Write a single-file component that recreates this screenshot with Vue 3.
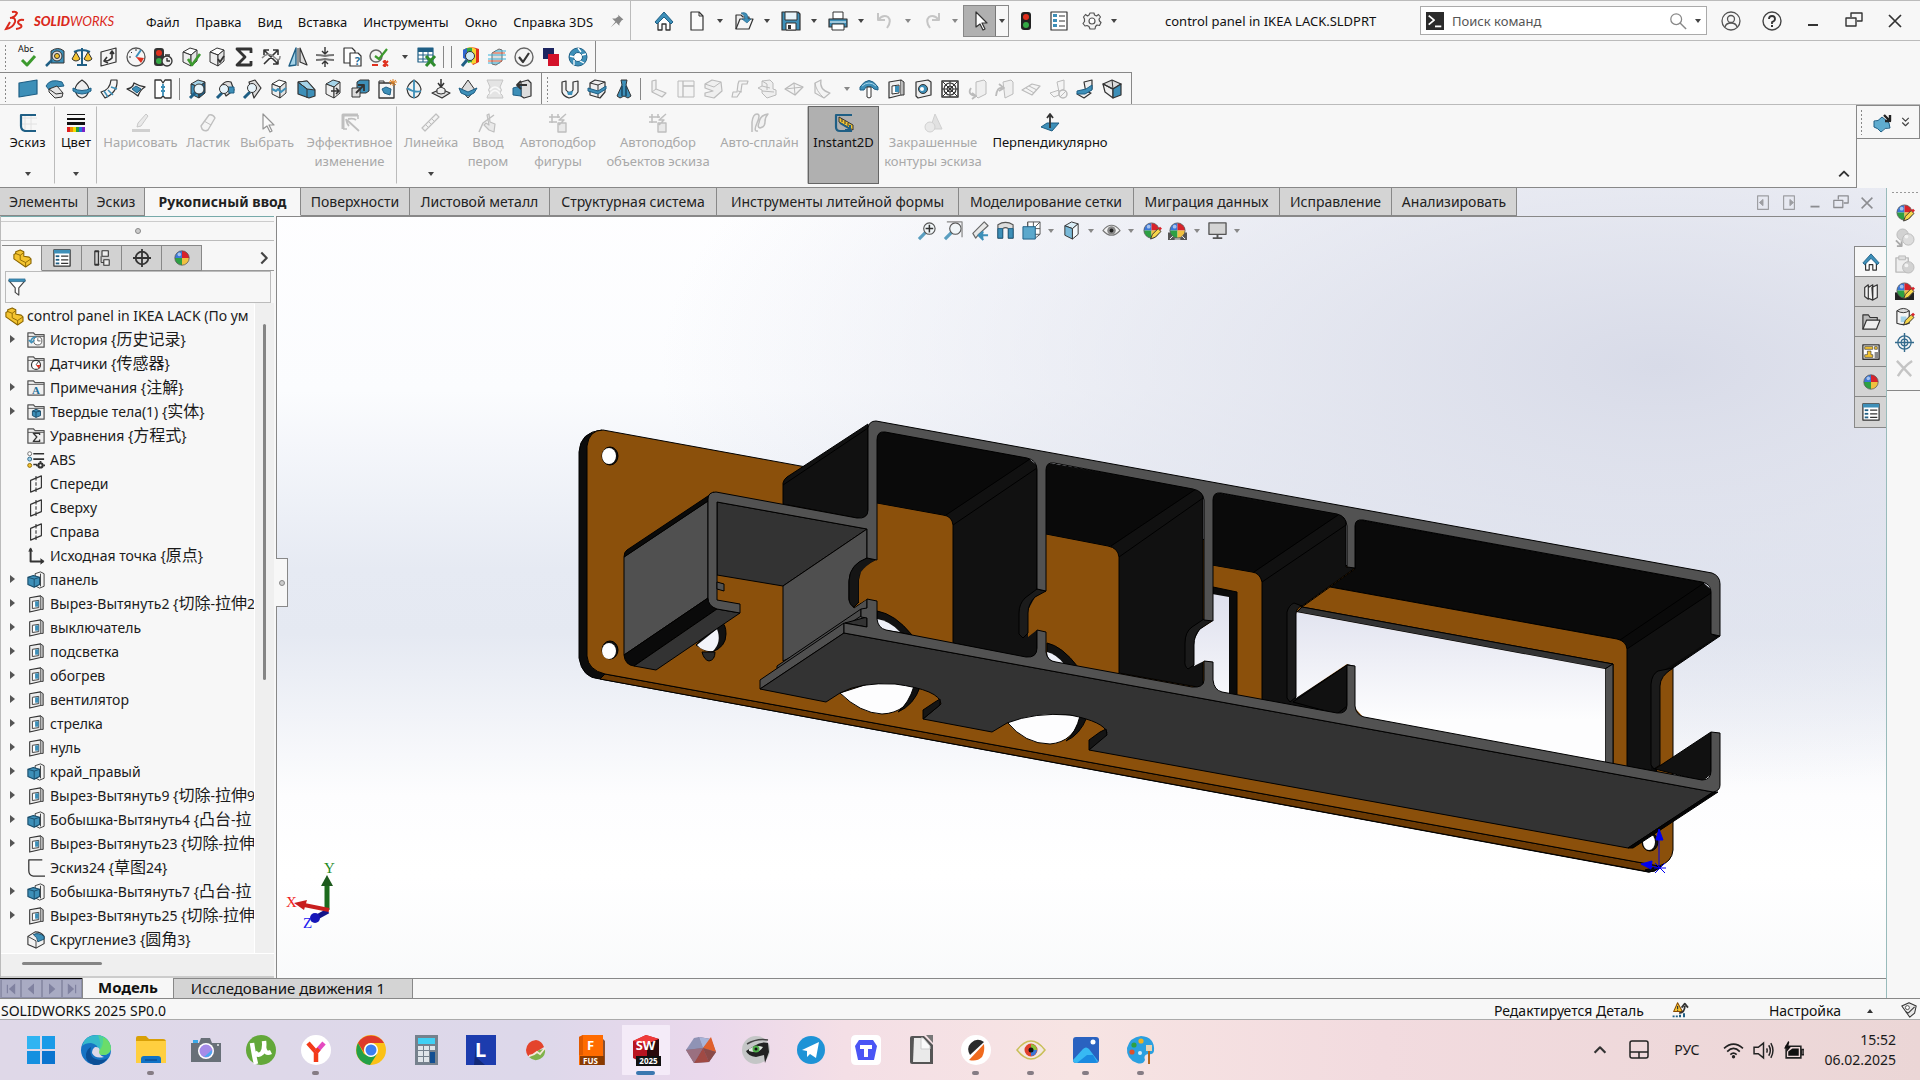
<script setup>
import { h } from 'vue'

const K = '#333'
const B = '#3d8fb8'
const L = '#a5d3e8'
const N = '#1f5f85'
const G = '#e4e4e4'
const Y = '#f4c430'

const c = (x, y, r) => `M${x - r} ${y}a${r} ${r} 0 1 0 ${2 * r} 0a${r} ${r} 0 1 0 ${-2 * r} 0z`
const r = (x, y, w, t) => `M${x} ${y}h${w}v${t}h${-w}z`

const cube = (a, b, d) => [
  ['M3 5l7-4 7 2-6 5z', a, K],
  ['M3 5l8 3v11l-8-4z', b, K],
  ['M11 8l6-5v11l-6 5z', d, K]
]
const ball = [
  ['M10 10V2a8 8 0 0 0-8 8z', '#3b78d8'],
  ['M10 10V2a8 8 0 0 1 8 8z', '#d8232a'],
  ['M10 10H2a8 8 0 0 0 8 8z', '#2ea043'],
  ['M10 10h8a8 8 0 0 1-8 8z', '#f0c040'],
  [c(10, 10, 8), 'none', '#555', 0.8],
  [c(7, 6, 2), 'rgba(255,255,255,.55)']
]
const pencil = [['M9 19l2-5 6-6 3 3-6 6z', '#f7d64a', K], ['M17 8l2-2 2 2-2 2z', '#d8232a']]
const folder = [['M1 18V2h6l2 2h10v14z', '#efefef', '#555', 1.4], ['M1 6h18', 'none', '#555', 1]]
const glass = [['M8 12l-7 7', 'none', '#5a9ec0', 3.4], [c(12, 8, 6), '#f1f6f9', '#555', 1.2]]
const lens = [...cube(L, B, N), ['M8 13l-6 6', 'none', N, 3], [c(11, 10, 5), '#e6f3fa', K]]
const bend = [['M3 2l4-1v9l10 4-4 4-10-5z', G, K, 1.2], ['M3 13l4-3', 'none', K]]

const icons = {
  home: [['M4 10v9h4v-6h4v6h4v-9l-6-6z', '#fff', K, 1.3], ['M1 11l9-10 9 10-2 2-7-7-7 7z', B, N]],
  page: [['M4 1h8l4 4v14H4z', '#fafafa', K, 1.2], ['M12 1v4h4', 'none', K]],
  open: [['M2 18V4h5l2 2h6v3', '#eee', K, 1.2], ['M2 18l4-10h13l-4 10z', '#f6f6f6', K, 1.2], ['M7 2q7-2 7 6h3l-4 4-5-4h3q0-4-4-6z', B, N, 0.6]],
  save: [['M1 1h16l2 2v16H1z', B, K, 1.2], [r(4, 1, 12, 8), '#e8f3f9', K], [r(5, 12, 10, 7), '#fff', K], [r(7, 14, 3, 4), K]],
  print: [[r(5, 1, 10, 7), '#fff', K], ['M1 8h18v8H1z', B, K, 1.2], [r(4, 13, 12, 6), '#fff', K], ['M2 11h16', 'none', '#fff', 1]],
  undo: [['M3 2v7h7M3 9q5-6 10-3q4 4-1 11', 'none', '#555', 2]],
  redo: [['M17 2v7h-7M17 9q-5-6-10-3q-4 4 1 11', 'none', '#555', 2]],
  cursor: [['M6 1v15l4-3 3 6 2-1-3-6h5z', '#fff', K, 1.2]],
  light: [['M8 1h4q3 0 3 3v12q0 3-3 3H8q-3 0-3-3V4q0-3 3-3z', '#222'], [c(10, 6, 3), '#e0301e'], [c(10, 14, 3), '#35a845']],
  list: [[r(2, 1, 16, 18), '#fff', K, 1.2], [r(4, 3, 4, 3), B], [r(4, 8, 4, 3), B], [r(4, 13, 4, 3), B], ['M10 5h6M10 10h6M10 15h6', 'none', K]],
  gear: [['M8 2h4l.5 2 2 1 2-1.500 2 2.500-1.500 2 .5 2 1.500 1.500-1.500 3-2.500-.5-1.500 1.500-.5 2.500H8l-1-2.500-2-1-2 .5-2-2.500 1.500-2V8L1.500 6l2-2.500 2 1.500 1.500-1z', '#f3f3f3', '#555', 1.2], [c(10, 10, 3), '#fff', '#555', 1.2]],
  pin: [['M11 2l7 6-2 1-3 4v3l-4-4-7 6 6-7-4-4 4 0 4-3z', '#888']],
  prompt: [[r(0, 0, 20, 20), '#2b2b2b'], ['M3 4l6 5-6 5', 'none', '#fff', 2], ['M10 16h7', 'none', '#fff', 2]],
  search: [[c(8, 8, 6), 'none', '#888', 1.4], ['M12 12l7 7', 'none', '#888', 1.6]],
  user: [[c(10, 10, 9), 'none', '#555', 1.3], [c(10, 8, 3.5), 'none', '#555', 1.3], ['M4 16q1-4 6-4t6 4', 'none', '#555', 1.3]],
  help: [[c(10, 10, 9), 'none', '#444', 1.4], ['M7 8q0-3 3-3t3 3q0 2-3 3v2', 'none', '#333', 1.8], [r(9, 14, 2, 2), K]],
  min: [[r(5, 13, 10, 2), K]],
  restore: [['M7 6V2h11v8h-5', 'none', K, 1.4], [r(2, 7, 10, 8), 'none', K, 1.4]],
  close: [['M4 4l12 12M16 4L4 16', 'none', K, 1.7]],
  abc: [['M4 13l5 5 8-9', 'none', '#3c9a2e', 3]],
  tape: [['M6 4q7-5 13 0v12H6z', B, K], [c(12, 9, 5), '#ddd', K], [c(12, 9, 2.500), Y, K], ['M7 13l-6 6', 'none', N, 2.5]],
  scale: [['M10 1v17M5 18h10M2 5q8-4 16 0', 'none', N, 2], ['M0 12l4-7 4 7q-4 4-8 0z', Y, K], ['M12 12l4-7 4 7q-4 4-8 0z', Y, K]],
  mass: [['M2 5l15-4v14L2 19z', '#f4f4f4', K, 1.2], ['M13 5v6q-3 3-7 3M8 10l-3 4 4 2M11 7l2-3 2 3', 'none', K, 1.6]],
  gauge: [[c(10, 10, 9), '#f6f6f6', '#555', 1.3], ['M10 10l5-7', 'none', B, 2], ['M10 10l8 1-3 5z', '#e0301e'], ['M3 10h2M5 5l1 1M10 2v2', 'none', K]],
  lightClock: [['M4 1h4q3 0 3 3v12q0 3-3 3H4q-3 0-3-3V4q0-3 3-3z', '#333'], [c(6, 6, 3), '#e0301e'], [c(6, 14, 3), '#35a845'], [c(14, 14, 5), '#eee', K, 1.300], ['M14 11v3h3M12 8h5', 'none', K, 1.4]],
  cubeCheck: [...cube('#fff', '#eee', G), ['M8 12l4 6 8-11', 'none', '#3c9a2e', 2.600]],
  cubeTick: [...cube('#fff', '#eee', G), ['M11 12l2 3 4-6', 'none', K, 1.800]],
  sigma: [['M17 6V2H3l8 8-8 8h14v-4', 'none', K, 2.800]],
  cross: [['M3 3l14 14M17 3L3 17M3 8V3h5M12 17h5v-5M12 3h5v5', 'none', K, 1.600], ['M1 11q6-7 12-1t6-1', 'none', '#888', 1.500]],
  mirror: [['M8 1v17l-7 1z', L, N, 1.400], ['M12 1l7 17-7-3z', '#ddd', K, 1.200], ['M10 1v18', 'none', K]],
  squeeze: [['M1 8q5 0 9 1 4-1 9-1M1 13q5 0 9-1 4 1 9 1', 'none', '#777', 2.200], ['M10 0v6M7 4l3 3 3-3M10 20v-5M7 17l3-3 3 3', 'none', K, 1.400]],
  docHelp: [['M2 1h8l3 3v12H2z', '#fff', K, 1.200], ['M8 6h8l3 3v10H8z', '#fff', K, 1.200]],
  nodeCheck: [[c(7, 9, 6), '#f4f4f4', '#666', 1.500], ['M6 9l4 3 8-10', 'none', '#3c9a2e', 2.200], ['M3 18h6M14 14l5 5M19 14l-5 5M16 13v7', 'none', '#e0301e', 1.800]],
  sheet: [[r(1, 1, 15, 14), '#fff', N, 1.200], [r(1, 1, 15, 4), N], ['M1 8h15M1 12h15M6 2v13M11 2v13', 'none', N], ['M9 9l9 10M18 9l-9 10', 'none', '#2e8b2e', 3]],
  rainbow: [['M3 3q7-5 16-1v13l-6 3z', '#e0301e'], ['M3 3q7-5 13-1v14l-4 1z', '#f6d632'], ['M3 3q5-3 9-2v14l-4 1z', '#35a845'], ['M3 3l4-2v12l-4-2z', '#2f66d0'], [c(10, 9, 4.500), '#cfe8f3', K], ['M7 13l-5 6', 'none', N, 3]],
  flow: [['M5 6l7-4 3 1v11l-6 4-4-1z', '#ddd', '#666'], ['M1 8h18M1 12h18M1 16h12M8 4h11', 'none', '#3ab0d8', 1], ['M1 14h14M6 6h12', 'none', '#e05a3a', 1]],
  okCircle: [[c(10, 10, 9), '#f3f3f3', '#666', 1.400], ['M5 10l4 5 6-9', 'none', K, 2.200]],
  swatch: [[r(2, 1, 11, 11), '#1d2560'], [r(7, 7, 11, 12), '#d3122a']],
  hex: [[c(10, 10, 9), B, N], [c(10, 10, 4.500), '#fff', N], ['M10 1l3 4M18 7l-4 1M16 16l-4-2M6 18v-5M2 9l4 1', 'none', '#fff', 1.300]],
  plane: [['M1 4l18-3v14L1 18z', B, N, 1.200]],
  sweep: [['M1 7q4-8 16-4l2 4-8 1-6 4z', B, N], ['M4 10l8-3 6 7-1 4-7 1-6-6z', G, K], ['M4 10l7 5 7-1', 'none', K]],
  egg: [['M10 1q6 4 7 9-1 8-7 9-6-1-7-9 1-5 7-9z', '#eee', K, 1.200], ['M1 9q9 5 18 0v3q-9 6-18 0z', B, N]],
  elbow: [['M12 1l6 0q1 12-12 18l-4-6q9-2 10-12z', '#f5f5f5', K, 1.200], ['M12 8l6 2M9 11l5 5M5 12l4 6', 'none', B, 1.500]],
  diamond: [['M1 10q6-1 7-6 5 3 11 4-5 3-7 9-5-4-11-7z', '#eee', K, 1.300], ['M6 10l4-3 5 3-4 4z', B, N]],
  shirt: [['M2 1h6l2 3 2-3h6v18h-6l-2-2-2 2H2z', '#fff', K, 1.300], ['M10 5v12M8 8h4M8 12h4', 'none', B, 1.800]],
  lens,
  lens2: [['M6 7q4-6 10-4l3 8-8 6z', '#ddd', K, 1.200], ['M13 8h6v6h-5z', B, N], ['M8 13l-6 6', 'none', N, 3], [c(9, 10, 4.500), '#e6f3fa', K]],
  lens3: [['M7 3l6-2 6 8-7 10z', '#ddd', K, 1.200], ['M8 13l-6 6', 'none', N, 3], [c(10, 9, 4.500), '#e6f3fa', K]],
  wave: [...cube('#fff', '#eee', G), ['M3 10l4 2 2-2 3 3 5-4', 'none', B, 2]],
  wedge: [['M2 3l9-1 8 9v6l-6 2-11-4z', B, K, 1.200], ['M2 3l9-1 8 9-8-1z', L, K], ['M2 3l9 7v9', 'none', K]],
  cubeArrow: [...cube(L, '#eee', G), ['M8 12h8M13 9l3 3-3 3', 'none', K, 1.600]],
  growBox: [['M7 3l3-2h9v11l-3 2H7z', B, K], [r(2, 9, 8, 9), '#ddd', K], ['M6 14l7-7M8 6h6v6', 'none', K, 1.800]],
  starBox: [['M2 4h15v15H2z', '#f5f5f5', K, 1.300], ['M2 4V2h5v2', 'none', K], ['M5 10l4-2 5 2-1 6-6-2z', B, N], ['M16 0v7M12 3h8M13 1l6 5M19 1l-6 5', 'none', '#e08020', 1]],
  eggB: [['M10 1q6 4 7 9-1 8-7 9-6-1-7-9 1-5 7-9z', '#f2f2f2', K, 1.200], ['M3 9q7 5 14 3M10 1v18', 'none', B, 1.800]],
  press: [['M1 14l9-4 9 4-8 5z', '#ddd', K, 1.200], ['M6 10l4-2 4 2v4l-4 1-4-1z', '#eee', K], ['M10 0v7M7 4l3 4 3-4', 'none', K, 1.500]],
  eggC: [['M10 1l7 10-7 8-7-8z', '#ddd', K], ['M1 9l9 4 9-4-3 5-6 3-7-3z', B, N]],
  arch: [['M2 19q0-3 3-5-3-3 0-6L2 1h16l-3 7q3 3 0 6 3 2 3 5z', '#bbb', '#555'], ['M5 15q5-7 10 0M5 11q5-6 10 0', 'none', '#fff', 1.500]],
  stack: [['M9 3l7-2 3 3v13l-7 2-3-2z', '#ddd', K, 1.200], ['M1 9l8-2v10l-8-1z', B, N], ['M15 6H6M9 2L5 6l4 4', 'none', K, 1.800]],
  uBend: [['M2 3l4-1v9q4 5 7 0V3l5-1v11q-3 5-9 6-6-2-7-6z', '#f2f2f2', K, 1.200], ['M7 13l6-1-1 4-4 0z', B]],
  clamp: [['M3 4l5-3 10 2v10l-5 6-10-3z', '#eee', K, 1.200], ['M3 4l8 2 7-3M11 6v12', 'none', K], ['M1 9l10 3 8-5v3l-8 5-10-3z', B, N]],
  dress: [['M7 1h6l-1 5 5 11-3 2-4-2-4 2-3-2 5-11z', B, K], ['M8 7v10M12 7v10', 'none', '#173f59', 1.400]],
  bend,
  bend2: [[r(2, 2, 16, 16), '#eee', K], ['M7 2v16M7 7h11', 'none', K, 1.300]],
  bend3: [['M2 5l7-4 9 2 1 9-8 7-9-2 0-3 8-2-8-3z', '#ddd', K, 1.200], ['M2 5l9 3 7-5', 'none', K]],
  bend4: [['M9 2h9l-1 3h-5l-1 7-4 6H2l1-5h4l1-8z', '#eee', K, 1.200], ['M8 12l4 1', 'none', K]],
  bend5: [['M5 2l8-1 3 3v6l3 1v5l-9 3-5-5V11l-4-2 4-2z', '#ddd', K], ['M5 7l8 2M5 12l12 1M5 2l5 3v6', 'none', K]],
  bend6: [['M1 10l9-6 9 4-8 8z', '#eee', K, 1.300], ['M1 10l18-2M10 4l1 12', 'none', K]],
  bend7: [['M4 4l6-3q-2 10 9 13l-6 5-9-5z', '#eee', K, 1.200], ['M4 4q1 8 9 15', 'none', K]],
  umbrella: [['M1 8q9-13 18 0v3l-4-1-2-2H7l-2 3-4 0z', B, N], ['M8 8h4v10q-2 2-4 0z', '#fff', K], ['M3 7q7-6 14 0', 'none', L]],
  cut: [['M3 3l12-2v15L3 19z', '#eee', K, 1.200], ['M15 1l3 2v13l-3 0', '#bbb', K], ['M6 7l7-1v8l-7 1z', '#fff', K], [r(9, 7, 4, 6), B]],
  cutHole: [['M3 3l12-2 3 2v13L5 19l-2-2z', '#eee', K, 1.200], [c(10, 10, 4.500), B, K], [c(9, 10, 2), '#fff']],
  grid: [[r(2, 2, 16, 16), '#fff', K, 1.500], [c(10, 10, 6), 'none', K, 1.200], [c(10, 10, 3), 'none', K], ['M10 2v16M2 10h16M3 3l14 14M17 3L3 17', 'none', K]],
  turn: [['M9 3l8-2 2 2v12l-8 4-2-2z', '#ddd', K], ['M4 9q-4 6 4 8M5 14l4 3-4 3', 'none', K, 1.800]],
  turn2: [['M9 3l8-2 2 2v12l-8 4z', '#ddd', K], ['M2 17q1-9 6-8M5 5l5 4-5 3', 'none', K, 1.800]],
  panels: [['M1 11l10-6 8 2-8 9z', '#eee', K, 1.200], ['M5 9l8 5M8 7l8 4', 'none', K]],
  noBend: [['M9 3l7-2v9l-5 3zM2 14l9-3v5l-5 2z', '#eee', K], [c(15, 15, 4), '#eee', K, 1.500], ['M12 18l6-6', 'none', K]],
  seat: [['M9 3l8-2v9l-6 4z', '#eee', K, 1.200], ['M2 15l8-3 6 2-7 5z', '#eee', K, 1.200], ['M2 12l9-2 6-4v5l-7 4-8 0z', B, N]],
  boxCut: [['M1 5l9-4 9 4-8 5z', '#ddd', K, 1.200], ['M1 5l10 5v9l-8-6z', '#f0f0f0', K, 1.200], ['M11 10l8-5v11l-8 3z', B, K, 1.200], ['M1 5l9 5M10 1l1 9', 'none', K]],
  sketch: [['M7 1v18M13 1v18M4 5h15M4 11h15', 'none', '#e2e2e2'], ['M18 2H3v11q0 4 4 5h11', 'none', N, 2.200]],
  color: [[r(1, 1, 18, 1), '#111'], [r(1, 5, 18, 2), '#111'], [r(1, 9, 18, 3), '#111'], [r(1, 14, 3, 5), '#e02020'], [r(4, 14, 3, 5), '#f08a00'], [r(7, 14, 3, 5), '#f2dc00'], [r(10, 14, 3, 5), '#27a03a'], [r(13, 14, 3, 5), '#2474d8'], [r(16, 14, 3, 5), '#7a22c8']],
  draw: [['M6 14l1-4 8-9 2 2-7 10z', '#ddd', '#999'], [r(1, 16, 18, 3), '#aaa']],
  eraser: [['M3 13l8-11q4-1 6 3l-7 12q-4 2-6-1z', '#f4f4f4', '#888', 1.400], ['M6 8l7 4', 'none', '#888']],
  effect: [['M18 2H3v14', 'none', '#888', 3], ['M18 2v4M3 16h4', 'none', '#888', 1.500], ['M7 7l12 11M6 6q1 5 3 7M8 6q6-1 8 1', 'none', '#888', 1.800]],
  ruler: [['M1 15L15 1l3 3L4 18z', '#f1f1f1', '#888', 1.200], ['M5 12l2 2M8 9l2 2M11 6l2 2', 'none', '#888']],
  hand: [['M9 2l2-1 1 8 5 2-1 8-5-2-5-5 2-2 3 2z', '#ddd', '#888', 1.200], ['M16 2L5 10 1 19', 'none', '#888', 1.500]],
  shape: [['M4 1v9M10 1v4M1 4h11M1 9h8', 'none', '#888', 1.500], ['M10 10h8v9h-8zM18 1l-7 6h5l-5 5', '#ddd', '#888', 1.400]],
  spline: [['M2 19V9q1-8 5-8t0 9 1 8M9 10q1-8 9-9-3 3-3 8t-5 6q-3-1-1-5', '#eee', '#888', 1.500]],
  instant: [['M18 2H2v12q0 4 4 4h12', 'none', N, 2.200], ['M5 4l14 8v5L5 9z', Y, K], ['M8 6v3M11 8v3M14 10v3', 'none', K], ['M6 10l10 6M16 12v5h-5', 'none', N, 2]],
  shaded: [['M12 1l7 15H7z', '#ccc', '#aaa'], [c(7, 14, 5), '#ddd', '#aaa']],
  normal: [['M1 14l6-4h12l-7 8z', B, N], ['M10 15V2M7 5l3-4 3 4', 'none', K, 1.800]],
  surface: [['M1 9q4 1 8-4 4 3 7 6l1 5q-5-1-9 4-3-4-7-5z', '#5faccf', N], ['M11 3l6 6M17 3v6h-5', 'none', '#222', 2.400]],
  dbl: [['M5 3l5 5 5-5M5 10l5 5 5-5', 'none', '#444', 1.800]],
  fit: [...glass, ['M12 4v8M8 8h8', 'none', K, 1.600]],
  zoomArea: [...glass, ['M3 1h16v16', 'none', '#888', 1.300]],
  prev: [['M3 13L15 1l4 4-10 9-3 4z', '#e8e8e8', '#666', 1.200], ['M19 15h-8M14 11l-5 4 5 5', B, B, 2]],
  section: [['M2 4q8-5 16 0v14h-5V8q-3-2-6 0v10H2z', '#ddd', '#555', 1.200], [r(2, 8, 5, 10), B, N], [r(13, 8, 5, 10), B, N]],
  orient: [[r(6, 1, 13, 13), '#fff', '#555'], ['M6 1v13l-4 4M19 1l-5 5M12 1v13M6 8h13M19 14l-5 4', 'none', '#555'], [r(1, 6, 13, 13), '#5ba8cc', N]],
  display: cube('#d9edf6', '#79b9d8', '#f2f8fb'),
  eye: [['M1 10q9-11 18 0-9 10-18 0z', '#f1f1f1', '#777', 1.200], [c(10, 10, 4.500), '#888'], [c(10, 10, 2), '#222']],
  ball,
  ballPencil: [...ball, ...pencil],
  ballScene: [['M0 12h4l2 5h8l2-5h4v8H0z', '#555'], ...ball, ['M2 19l3-3M18 19l-3-3M7 19h6', 'none', '#fff']],
  ballScenePencil: [['M0 12h20v8H0z', '#222'], ...ball, ...pencil],
  ballCopy: [[c(8, 6, 6), '#d2d2d2', '#bbb'], [c(14, 11, 6), '#dcdcdc', '#bbb'], [c(12, 8, 2), '#f2f2f2'], ['M1 12l6 6M7 13v5H2', 'none', '#aaa', 2]],
  ballPaste: [['M1 3h13v15H1z', '#eee', '#bbb', 1.500], [r(4, 1, 7, 4), '#ddd', '#bbb'], [c(14, 13, 6), '#d2d2d2', '#bbb'], [c(12, 11, 2), '#f2f2f2']],
  can: [['M2 4v13q7 3 13 0V4', '#f5f5f5', K, 1.200], ['M2 4q7-5 13 0-6 4-13 0z', '#ddd', K], [r(6, 10, 6, 6), L], ...pencil],
  target: [[c(10, 10, 7), 'none', '#346b8d', 1.300], [c(10, 10, 3.500), 'none', '#346b8d', 1.200], ['M10 0v20M0 10h20', 'none', '#346b8d', 1.500]],
  bigX: [['M2 2l15 16M18 2Q9 8 3 18', 'none', '#c4c4c4', 2.500]],
  monitor: [[r(1, 2, 18, 12), '#d4d4d4', '#555', 1.400], ['M10 14v4M5 18h10', 'none', '#555', 2]],
  books: [['M3 5l4-3v16l-4-3zM7 5l5-3v17l-5-2zM11 5l6-3v14l-5 3z', '#f1f1f1', K, 1.300]],
  folderOpen: [['M1 18V2h6l2 3h8v4', '#bbb', K, 1.300], ['M1 18l4-10h15l-4 10z', '#eee', K, 1.300]],
  palette: [[r(1, 2, 18, 16), '#fff', K, 1.500], [r(3, 4, 9, 3), Y, K, 0.700], [r(14, 4, 3, 3), Y, K, 0.700], ['M3 16v-3h3v-4h4v4h2v3z', Y, K, 0.700], [r(14, 10, 4, 7), '#888']],
  props: [[r(1, 1, 18, 18), '#fff', K, 1.400], [r(1, 1, 18, 4), B], [r(3, 7, 4, 2), N], [r(3, 11, 4, 2), N], [r(3, 15, 4, 2), N], ['M9 8h8M9 12h8M9 16h8', 'none', K, 1.300]],
  part: [['M1 6l2-1V3l5-2 4 2v5l6 1 2 2v5l-6 4L1 11z', Y, '#8a6500', 1.200], ['M3 5l5 2 4-3M8 7v5l6 3 6-4M14 15v5', 'none', '#8a6500']],
  config: [['M2 2v16M2 3h5M2 17h5M2 2h4v16H2', 'none', K, 1.300], [r(10, 2, 7, 6), '#eee', K, 1.200], [r(12, 12, 6, 6), '#eee', K, 1.200], ['M9 8v7h3', 'none', K]],
  cross2: [[c(10, 10, 7), 'none', K, 2], ['M10 0v20M0 10h20', 'none', K, 2]],
  chevron: [['M7 4l6 6-6 6', 'none', '#444', 2.400]],
  up: [['M4 13l6-6 6 6', 'none', K, 2.400]],
  funnel: [['M1 3h18l-7 8v8l-4-3v-5z', '#fff', '#444', 1.300], [r(1, 1, 18, 3), B, N, 0.600]],
  history: [...folder, [c(12, 11, 4.500), '#fff', '#555'], ['M12 8v3h3', 'none', '#555'], ['M4 12q1-5 6-5M2 10l3 3 3-3', 'none', B, 1.800]],
  sensor: [...folder, [c(10, 11, 5), '#fff', K, 1.300], ['M10 11l5 0-2 4z', '#e0301e'], ['M10 11l3-4', 'none', K]],
  note: folder,
  equation: [...folder, ['M14 9V7H7l4 4-4 5h7v-2', 'none', K, 1.500]],
  bodies: [...folder, ['M6 9l4-2 5 2v5l-5 2-4-2z', B, '#174a68'], ['M6 9l4 1 5-1M10 10v6', 'none', '#174a68']],
  material: [[c(3, 3, 2.200), '#fff', '#666'], [c(3, 9, 2.200), L, N], [c(3, 16, 2.200), Y, '#8a6500'], ['M7 3h12M7 9h12M7 15h4', 'none', K, 1.800], [c(15, 16, 3.500), K], [c(15, 16, 1.200), '#f7f7f7'], ['M15 11v2M10 16h2M18 16h2', 'none', K, 2]],
  refPlane: [['M4 6l12-5v13L4 19z', 'none', K, 1.300], ['M10 1v5M10 8v4M10 14v5', 'none', K, 1.200]],
  origin: [['M4 2v14h14', 'none', K, 2.200], ['M2 5l2-4 2 4M15 13l4 3-4 3', K, K]],
  boss: [['M9 3l6-2 4 2v14l-5 2-4-2z', '#f3f3f3', K], ['M15 3v14', 'none', K], ['M1 7l6-2 7 2v8l-6 3-7-3z', B, '#174a68', 1.200], ['M1 7l7 2 6-2M8 9v9', 'none', '#174a68']],
  sketchItem: [['M17 1H2v12q0 5 5 6h13', 'none', K, 1.400]],
  fillet: [['M1 6l8-5q7 0 10 5v8l-9 5-9-4z', '#f2f2f2', K, 1.200], ['M7 4q6-3 12 2v3l-7 3q0-5-5-8z', B, '#174a68'], ['M1 6l9 5v8', 'none', K]],
  paneL: [[r(4, 2, 12, 15), 'none', '#555', 1.300], ['M10 6v7L6 9.500z', '#555', '#555']],
  paneR: [[r(4, 2, 12, 15), 'none', '#555', 1.300], ['M11 6v7l4-3.500z', '#555', '#555']],
  rebuild: [['M2 12L7 1l6 11z', Y, '#8a4b00', 1.300], ['M7 5v4M7 10v1', 'none', K, 1.500], ['M9 14q7-1 7-9M12 7l4-5 4 5', 'none', K, 2.200], ['M2 19v-2M6 19v-2M10 19v-3M15 19v-5', 'none', N, 2.500]],
  tag: [['M1 5l9-4 9 4-2 9-6 5z', '#e8e8e8', K, 1.300], [c(8, 7, 2.500), '#fff', K], ['M9 14l8-8M6 12l3 2', 'none', K, 1.300]]
}

const Icon = (props) =>
  h('svg', { class: ['icon', props.off && 'off'], viewBox: '0 0 20 20', 'aria-hidden': 'true' },
    (icons[props.name] || []).map(([d, fill = 'none', stroke = 'none', w = 1]) =>
      h('path', { d, fill, stroke, 'stroke-width': w, 'stroke-linejoin': 'round' })))
Icon.props = ['name', 'off']

const menus = ['Файл', 'Правка', 'Вид', 'Вставка', 'Инструменты', 'Окно', 'Справка 3DS']
const quick = [
  { i: 'page' }, { i: 'open' }, { i: 'save' }, { i: 'print' }, { i: 'undo', off: true }, { i: 'redo', off: true }
]
const row1 = ['abc', 'tape', 'scale', 'mass', 'gauge', 'lightClock', 'cubeCheck', 'cubeTick', 'sigma', 'cross', 'mirror', 'squeeze', 'docHelp', 'nodeCheck']
const row1b = ['rainbow', 'flow', 'okCircle', 'swatch', 'hex']
const row2 = ['plane', 'sweep', 'egg', 'elbow', 'diamond', 'shirt']
const row2b = [['lens'], ['lens2'], ['lens3'], ['wave'], ['wedge'], ['cubeArrow'], ['growBox'], ['starBox'], ['eggB'], ['press'], ['eggC'], ['arch', true], ['stack']]
const row3 = ['uBend', 'clamp', 'dress']
const row3b = ['bend', 'bend2', 'bend3', 'bend4', 'bend5', 'bend6', 'bend7']
const row3c = [['umbrella'], ['cut'], ['cutHole'], ['grid'], ['turn', true], ['turn2', true], ['panels', true], ['noBend', true], ['seat'], ['boxCut']]

const ribbon = [
  { t: ['Эскиз'], i: 'sketch', w: 55, drop: true, sep: true },
  { t: ['Цвет'], i: 'color', w: 42, drop: true, sep: true },
  { t: ['Нарисовать'], i: 'draw', w: 87, off: true },
  { t: ['Ластик'], i: 'eraser', w: 48, off: true },
  { t: ['Выбрать'], i: 'cursor', w: 70, off: true },
  { t: ['Эффективное', 'изменение'], i: 'effect', w: 95, off: true, sep: true },
  { t: ['Линейка'], i: 'ruler', w: 68, off: true, drop: true },
  { t: ['Ввод', 'пером'], i: 'hand', w: 46, off: true },
  { t: ['Автоподбор', 'фигуры'], i: 'shape', w: 94, off: true },
  { t: ['Автоподбор', 'объектов эскиза'], i: 'shape', w: 106, off: true },
  { t: ['Авто-сплайн'], i: 'spline', w: 97, off: true, sep: true },
  { t: ['Instant2D'], i: 'instant', w: 71, on: true },
  { t: ['Закрашенные', 'контуры эскиза'], i: 'shaded', w: 108, off: true },
  { t: ['Перпендикулярно'], i: 'normal', w: 126 }
]
const tabs = [
  ['Элементы', 88], ['Эскиз', 57], ['Рукописный ввод', 156], ['Поверхности', 109], ['Листовой металл', 140],
  ['Структурная система', 167], ['Инструменты литейной формы', 242], ['Моделирование сетки', 175],
  ['Миграция данных', 146], ['Исправление', 112], ['Анализировать', 125]
]
const panelTabs = ['part', 'props', 'config', 'cross2', 'ball']
const tree = [
  ['history', 'История {历史记录}', 1], ['sensor', 'Датчики {传感器}'], ['note', 'Примечания {注解}', 1],
  ['bodies', 'Твердые тела(1) {实体}', 1], ['equation', 'Уравнения {方程式}'], ['material', 'ABS'],
  ['refPlane', 'Спереди'], ['refPlane', 'Сверху'], ['refPlane', 'Справа'], ['origin', 'Исходная точка {原点}'],
  ['boss', 'панель', 1], ['cut', 'Вырез-Вытянуть2 {切除-拉伸2', 1], ['cut', 'выключатель', 1],
  ['cut', 'подсветка', 1], ['cut', 'обогрев', 1], ['cut', 'вентилятор', 1], ['cut', 'стрелка', 1],
  ['cut', 'нуль', 1], ['boss', 'край_правый', 1], ['cut', 'Вырез-Вытянуть9 {切除-拉伸9', 1],
  ['boss', 'Бобышка-Вытянуть4 {凸台-拉', 1], ['cut', 'Вырез-Вытянуть23 {切除-拉伸', 1],
  ['sketchItem', 'Эскиз24 {草图24}'], ['boss', 'Бобышка-Вытянуть7 {凸台-拉', 1],
  ['cut', 'Вырез-Вытянуть25 {切除-拉伸', 1], ['fillet', 'Скругление3 {圆角3}']
]
const isHan = (s) => /[\u4e00-\u9fff]/.test(s)
const runs = (s) => s.split(/([\u4e00-\u9fff]+)/).filter(Boolean)

const viewTools = [
  ['fit'], ['zoomArea'], ['prev'], ['section'], ['orient', 1], ['display', 1], ['eye', 1], ['ballPencil'], ['ballScene', 1], ['monitor', 1]
]
const paneTabs = ['home', 'books', 'folderOpen', 'palette', 'ball', 'props']
const side = ['ballPencil', 'ballCopy', 'ballPaste', 'ballScenePencil', 'can', 'target', 'bigX']
const navs = ['M4 3v14M16 3l-8 7 8 7z', 'M14 3l-8 7 8 7z', 'M6 3l8 7-8 7z', 'M16 3v14M4 3l8 7-8 7z']

const apps = [
  { n: 'Пуск', s: [[r(1, 1, 13, 13), '#2fb4f2'], [r(16, 1, 13, 13), '#1a9be8'], [r(1, 16, 13, 13), '#1590e0'], [r(16, 16, 13, 13), '#0a74cf']] },
  { n: 'Edge', s: [[c(15, 15, 15), '#1673c4'], ['M1 11Q4 0 16 0q13 1 14 14-1 6-8 6-5 0-4-4-1-7-8-8-6 0-9 3z', '#35b9cb'], ['M17 0q12 2 13 14-2 6-8 6-5 0-4-4 3-7-1-16z', '#4cd29a'], ['M22 2q8 4 8 12-2 6-8 6-5 0-4-4 5-5 4-14z', '#6bdc6a'], ['M10 12q-3 12 9 13 5 0 8-2-6 8-14 7-9-3-8-11 1-5 5-7z', '#0c4f96'], ['M14 12q6 0 4 5 0 3 5 5-9 2-12-4 0-4 3-6z', '#dcd8e8']] },
  { n: 'Проводник', run: 1, s: [['M0 3q0-2 2-2h8l3 3h14q3 0 3 3v19H0z', '#d9a006'], [r(0, 6, 30, 22), '#ffcf3f'], ['M5 28v-4q0-3 3-3h14q3 0 3 3v4z', '#1173c6'], ['M9 25h12', 'none', '#0c4f96', 1.500]] },
  { n: 'Камера', s: [['M0 8h8l2-5h9l2 5h9v19H0z', '#687078'], [r(2, 5, 5, 3), '#39a9e8'], [c(15, 16, 8), '#fff'], [c(15, 16, 6.500), '#a58be8'], ['M15 22a6 6 0 0 0 6-7l-8 7z', '#4aa8f0'], [r(26, 9, 2, 2), '#c8ccd0']] },
  { n: 'uTorrent', s: [[c(15, 15, 15), '#63a83a'], ['M6 8q2 13 4 21M9 17q3 5 7 1 3-4 2-12M18 12q1 8 7 5', 'none', '#fff', 4.500]] },
  { n: 'Яндекс Браузер', run: 1, s: [[c(15, 15, 15), '#fff'], ['M7 8l8 9v10', 'none', '#f33a18', 4.500], ['M15 17l8-9', 'none', '#e44ac0', 4.500], ['M15 17l3-3', 'none', '#f33a18', 4.500]] },
  { n: 'Chrome', s: [[c(15, 15, 15), '#fbc116'], ['M2 8a15 15 0 0 1 26 0H15a7 7 0 0 0-6 11z', '#de3a2c'], ['M2 8a15 15 0 0 0 12 22l7-11-6 3-7-3z', '#23a047'], [c(15, 15, 7), '#fff'], [c(15, 15, 5.500), '#3c7ff0']] },
  { n: 'Калькулятор', s: [[r(4, 0, 23, 30), '#75818d'], [r(7, 3, 17, 6), '#40d0f4'], [r(7, 11, 5, 4), '#dfe5ea'], [r(13, 11, 5, 4), '#dfe5ea'], [r(19, 11, 5, 4), '#dfe5ea'], [r(7, 16, 5, 5), '#dfe5ea'], [r(13, 16, 5, 5), '#dfe5ea'], [r(19, 17, 5, 11), '#124f92'], [r(7, 22, 5, 5), '#dfe5ea'], [r(13, 22, 5, 5), '#dfe5ea']] },
  { n: 'L', s: [[r(0, 0, 30, 30), '#1c3cae'], ['M10 8v14l9 8H8z', '#132a78']], txt: 'L' },
  { n: 'Дельта', s: [['M5 15q1-9 10-10 6 1 8 7l-8 5q-4 4-8 4-2-3-2-6z', '#e4442c'], ['M8 22l10-7 6-1q1 7-5 10-6 3-11-2z', '#7fb24a'], ['M8 21q5-1 8-4l3 2 5-6', 'none', '#f4e8d8', 1.800]] },
  { n: 'Fusion', s: [['M3 2l4-2h20v30H3z', '#ff6b00'], ['M27 4l2 2v24h-2z', '#8a5030'], ['M3 2l4-2v20H3z', '#e05a00'], [r(4, 21, 24, 9), '#8a3a00']], txt: 'F', sub: 'FUS' },
  { n: 'SOLIDWORKS', on: 1, s: [['M2 6l13-6 13 4v20l-12 6-14-7z', '#b91420'], ['M2 6l13-6 13 4-12 5z', '#f03a3a'], ['M16 9l12-5v20l-12 6z', '#2a0a0c']], txt: 'SW', sub: '2025' },
  { n: 'Многогранник', s: [['M13 2l12 2 5 13-7 10-15 1L0 15z', '#7c6f8a'], ['M8 3l5-1 4 11L0 15z', '#8f93b5'], ['M13 2l12 2-8 9z', '#a8b4d8'], ['M25 2l5 15-13-4z', '#e0602c'], ['M17 13l13 4-7 10z', '#8a4a48'], ['M17 13l6 14-15 1z', '#a04a44'], ['M0 15l17-2-9 15z', '#9a7080']] },
  { n: 'Глаз', s: [[c(15, 15, 14), '#c4c6c6'], ['M13 11q7-5 14-3l1 9-4 11-1-8-8 2q-8-1-10-6z', '#222'], ['M8 14q7-5 14-2-4 7-14 4z', '#dfe8df'], [c(15, 14, 3.500), '#4fae4a'], [c(15, 14, 1.500), '#111'], ['M6 9q10-6 21-4', 'none', '#444', 1.500]] },
  { n: 'Telegram', s: [[c(15, 15, 14), '#1e93d6'], ['M6 15l17-8-3 16-6-4-3 3v-6z', '#fff']] },
  { n: 'Teno', s: [['M5 0h20q5 0 5 5v20q0 5-5 5H5q-5 0-5-5V5q0-5 5-5z', '#fff'], ['M8 5h14l4 6-3 14H7L4 11z', '#4a55f5'], ['M9 10h12v4h-4v8h-4v-8H9z', '#fff']] },
  { n: 'LibreOffice', s: [['M6 1h12l9 9v19H6q-2 0-2-2V3q0-2 2-2z', '#555'], ['M8 3h9l7 8v16H7z', '#eaeaea'], ['M15 3h2l7 8v3h-9z', '#fafafa', '#ccc'], ['M20 0h7v8z', '#777']] },
  { n: 'Слайсер', run: 1, s: [[c(15, 15, 15), '#fff'], ['M9 20q-4-7 1-12 6-6 13-1z', '#2a2a2a'], ['M23 9q1 8-2 13-5 5-13 3z', '#f06a1e']] },
  { n: 'Просмотр', run: 1, s: [['M1 15q14-18 28 0-14 18-28 0z', '#f3e7e2', '#c9bf58', 1.500], [c(15, 15, 6.500), '#e0402c'], ['M15 15V9a6 6 0 0 1 6 6z', '#8ac43a'], ['M15 15h6a6 6 0 0 1-6 6z', '#3b78d8'], [c(15, 15, 2.500), '#111']] },
  { n: 'Фотографии', run: 1, s: [['M5 2h20q3 0 3 3v20q0 3-3 3H5q-3 0-3-3V5q0-3 3-3z', '#2a62c0'], ['M2 25L12 14q3-3 6 0l9 12q-1 2-3 2H5q-3 0-3-3z', '#37b9f3'], ['M6 28L16 20h6l4 7-2 1z', '#1a8ae0'], [c(22, 7, 2.500), '#fff']] },
  { n: 'Paint', run: 1, s: [['M15 1q14 1 13 15-1 4-6 3-5 1-3 6-2 5-8 3Q0 24 1 13 4 2 15 1z', '#2ba0e0'], [c(8, 10, 2.600), '#2ea043'], [c(15, 6, 2.600), '#f2b21e'], [c(6, 17, 2.600), '#e0502c'], [c(14, 18, 2), '#d8ecf8'], ['M20 10h6v6h-6z', '#e8d2b0'], ['M22 16h2v13h-2z', '#b4681e']] }
]
</script>

<template>
  <div class="app">
    <header class="title">
      <div class="logo">
        <svg class="ds" viewBox="0 0 22 22" aria-hidden="true">
          <path d="M8 2q4-1 5 1-1 3-5 5M6 8q6-1 5 4-2 6-9 7l4-7M20 10q-5-1-6 2 0 2 3 3 2 3-5 4" fill="none" stroke="#da291c" stroke-width="2" />
        </svg>
        <span><b>SOLID</b>WORKS</span>
      </div>
      <nav class="menu">
        <a v-for="m in menus" :key="m" href="#">{{ m }}</a>
        <button class="plain" aria-label="Закрепить"><Icon name="pin" /></button>
      </nav>
      <div class="quick">
        <button class="plain first" aria-label="Главная"><Icon name="home" /></button>
        <template v-for="q in quick" :key="q.i">
          <button class="plain q" :aria-label="q.i"><Icon :name="q.i" :off="q.off" /></button>
          <i class="caret" :class="{ dim: q.off }"></i>
        </template>
        <div class="select-btn">
          <button class="plain pressed" aria-label="Выбрать"><Icon name="cursor" /></button>
          <button class="plain arrow" aria-label="Параметры выбора"><i class="caret"></i></button>
        </div>
        <button class="plain w33" aria-label="Перестроить"><Icon name="light" /></button>
        <button class="plain w33" aria-label="Свойства"><Icon name="list" /></button>
        <button class="plain w33" aria-label="Параметры"><Icon name="gear" /></button>
        <i class="caret"></i>
      </div>
      <div class="doc">control panel in IKEA LACK.SLDPRT</div>
      <label class="search">
        <Icon name="prompt" />
        <input type="text" placeholder="Поиск команд" aria-label="Поиск команд" />
        <Icon name="search" /><i class="caret"></i>
      </label>
      <div class="win">
        <button v-for="w in ['user', 'help', 'min', 'restore', 'close']" :key="w" class="plain" :aria-label="w"><Icon :name="w" /></button>
      </div>
    </header>

    <div class="bars upper">
      <div class="bar first-bar">
        <i class="grip"></i>
        <button v-for="i in row1" :key="i" class="tool" :aria-label="i">
          <span v-if="i === 'abc'" class="over">Abc</span><Icon :name="i" /><span v-if="i === 'docHelp'" class="q-mark">?</span>
        </button>
        <i class="caret wide"></i>
        <button class="tool" aria-label="Таблица"><Icon name="sheet" /></button>
        <i class="vsep"></i><i class="vsep"></i>
        <button v-for="i in row1b" :key="i" class="tool" :aria-label="i"><Icon :name="i" /></button>
      </div>
    </div>
    <div class="bars">
      <div class="bar">
        <i class="grip"></i>
        <button v-for="i in row2" :key="i" class="tool" :aria-label="i"><Icon :name="i" /></button>
        <i class="vsep"></i>
        <button v-for="i in row2b" :key="i[0]" class="tool" :aria-label="i[0]"><Icon :name="i[0]" :off="i[1]" /></button>
      </div>
      <div class="bar">
        <i class="grip"></i>
        <button v-for="i in row3" :key="i" class="tool" :aria-label="i"><Icon :name="i" /></button>
        <i class="vsep"></i>
        <button v-for="i in row3b" :key="i" class="tool" :aria-label="i"><Icon :name="i" :off="true" /></button>
        <i class="caret wide dim"></i>
        <button v-for="i in row3c" :key="i[0]" class="tool" :aria-label="i[0]"><Icon :name="i[0]" :off="i[1]" /></button>
      </div>
    </div>

    <div class="ribbon-row">
      <div class="ribbon">
        <button v-for="(b, n) in ribbon" :key="n" class="rb" :class="{ off: b.off, on: b.on, sep: b.sep }" :style="{ width: b.w + 'px' }">
          <Icon :name="b.i" />
          <span v-for="t in b.t" :key="t">{{ t }}</span>
          <i v-if="b.drop" class="caret"></i>
        </button>
        <button class="plain fold" aria-label="Свернуть"><Icon name="up" /></button>
      </div>
      <div class="mini"><i class="grip"></i><Icon name="surface" /><Icon name="dbl" /></div>
    </div>

    <div class="work">
      <main class="main">
        <div class="tabrow">
          <button v-for="(t, n) in tabs" :key="t[0]" class="tab" :class="{ active: n === 2 }" :style="{ width: t[1] + 'px' }">{{ t[0] }}</button>
          <div class="docwin">
            <button v-for="w in ['paneL', 'paneR', 'min', 'restore', 'close']" :key="w" class="plain" :aria-label="w"><Icon :name="w" /></button>
          </div>
        </div>

        <div class="body">
          <aside class="panel">
            <div class="splitter"><i class="dot"></i></div>
            <div class="ptabs">
              <button v-for="(p, n) in panelTabs" :key="p" :class="{ active: n === 0 }" :aria-label="p"><Icon :name="p" /></button>
              <span class="more"><Icon name="chevron" /></span>
            </div>
            <div class="filter"><Icon name="funnel" /></div>
            <div class="treewrap">
              <ul class="tree">
                <li class="root"><Icon name="part" /><span>control panel in IKEA LACK (По ум</span></li>
                <li v-for="t in tree" :key="t[1]">
                  <i class="exp" :class="{ none: !t[2] }"></i>
                  <span class="ic"><Icon :name="t[0]" /><b v-if="t[0] === 'note'">A</b></span>
                  <span class="name"><span v-for="(s, n) in runs(t[1])" :key="n" :class="{ han: isHan(s) }">{{ s }}</span></span>
                </li>
              </ul>
              <div class="vscroll"><i></i></div>
            </div>
            <div class="hscroll"><i></i></div>
          </aside>

          <section class="canvas">
            <svg class="model" viewBox="277 217 1609 761" preserveAspectRatio="xMidYMid meet" role="img" aria-label="control panel in IKEA LACK">
              <defs>
                <linearGradient id="win" gradientUnits="userSpaceOnUse" x1="0" y1="600" x2="0" y2="720">
                  <stop offset="0" stop-color="#dfe1ee" /><stop offset="1" stop-color="#fdfdfe" />
                </linearGradient>
              </defs>
              <g stroke="#000" stroke-width="1" stroke-linejoin="round">
                <path fill="#0c0c0c" d="M602 430Q580 432 579 452V658Q582 678 600 679L1648 872Q1656 872 1662 866L605 674Z" />
                <path fill="#6b3a04" d="M605 674L1659 866 1650 872 600 679Z" />
                <path fill="#8b500b" d="M587 446Q589 430 603 430L1673 625V850Q1672 862 1659 866L605 674Q588 670 587 656Z" />
                <path fill="#0c0c0c" d="M1645 870L1660 866 1655 871 1648 872Z" />
                <ellipse cx="610" cy="456" rx="8" ry="9" fill="#111" /><ellipse cx="609" cy="456" rx="7" ry="8" fill="#fff" stroke="none" />
                <ellipse cx="610" cy="650" rx="8" ry="9" fill="#111" /><ellipse cx="609" cy="651" rx="7" ry="8" fill="#fff" stroke="none" />
                <ellipse cx="1650" cy="842" rx="8" ry="9" fill="#111" /><ellipse cx="1649" cy="842" rx="6" ry="8" fill="#fff" stroke="none" />

                <path fill="#111" d="M696 645Q704 651 712 652 726 647 726 634 726 624 721 622L712 628Z" />
                <path fill="#f2f4f9" stroke="none" d="M697 645L717 629Q722 642 713 651 703 652 697 645Z" />
                <path fill="#2b2b2b" d="M702 652H715Q715 660 709 661 704 660 702 652Z" />

                <path fill="#111" d="M877 611Q895 614 912 635L877 628Z" />
                <path fill="#eef0f7" stroke="none" d="M877 619Q890 621 900 632L885 630Q877 628 877 622Z" />
                <path fill="#fdfdfe" d="M840 693Q860 713 882 714 908 713 917 686L880 680Z" />
                <path fill="#111" d="M914 686L920 687Q914 705 898 712 909 703 914 686Z" />
                <path fill="#fdfdfe" d="M1007 722Q1025 744 1050 744 1074 742 1081 716L1040 712Z" />
                <path fill="#111" d="M1080 716L1087 717Q1080 735 1066 741 1076 732 1080 716Z" />

                <path fill="#111" d="M783 483Q784 479 787 477L868 424V514L862 519 783 504Z" />
                <path fill="none" d="M783 485L868 428" />
                <path fill="#111" d="M876 432H884L1028 458 1037 466V655L1027 658 953 643V525Q952 516 943 515L877 503Z" />
                <path fill="#0a0a0a" stroke="none" d="M877 432L884 431 1030 459 946 515 877 503Z" />
                <path fill="none" d="M1030 459L946 515M1037 468L953 525" />
                <path fill="#8b500b" stroke="none" d="M1035 597L1046 591V632L1037 630 1028 637V610Z" />
                <path fill="#1b1b1b" d="M1037 589L1046 591 1035 597Q1028 604 1028 613V633L1023 638 1019 634V613Q1019 604 1025 598Z" />

                <path fill="#111" d="M1046 463L1203 489V688L1119 673V557Q1118 548 1108 546L1046 534Z" />
                <path fill="#0a0a0a" stroke="none" d="M1046 464L1196 489 1111 546 1046 534Z" />
                <path fill="none" d="M1196 489L1111 546M1203 498L1119 557" />
                <path fill="#111" d="M1047 643Q1062 646 1078 667L1047 660Z" />
                <path fill="#eef0f7" stroke="none" d="M1047 652Q1056 654 1064 664L1055 662Q1047 660 1047 652Z" />
                <path fill="url(#win)" stroke="none" d="M1200 629L1213 621V662L1204 661 1194 666V640Z" />
                <path fill="#1b1b1b" d="M1204 619L1212 621 1200 629Q1194 635 1194 645V665L1188 669Q1184 666 1185 660V643Q1185 632 1192 627Z" />

                <path fill="#111" d="M1212 492L1346 515V567L1355 568 1302 606H1296V698L1355 660V720L1262 700V582Q1260 573 1252 572L1212 565Z" />
                <path fill="#0a0a0a" stroke="none" d="M1212 493L1338 515 1254 572 1212 565Z" />
                <path fill="none" d="M1338 515L1254 572M1346 525L1262 582" />
                <path fill="#0a0a0a" d="M1213 587L1237 592V696L1213 690Z" />
                <path fill="url(#win)" stroke="none" d="M1212 594L1229 597V695L1212 691Z" />

                <path fill="#0a0a0a" d="M1355 519L1702 582 1711 590V634L1720 636 1673 668 1655 680V765L1657 772 1627 767V649L1617 639 1330 587 1355 569Z" />
                <path fill="#111" stroke="none" d="M1627 649L1711 593V634L1716 637 1658 674Q1651 678 1651 688V770L1627 766Z" />
                <path fill="none" d="M1704 583L1620 640M1711 593L1627 649" />
                <path fill="#8b500b" d="M1330 587L1617 639Q1626 641 1627 649V767L1613 764V664L1302 607Z" />
                <path fill="#333" d="M1302 607L1613 664 1605 669 1297 612Z" />
                <path fill="#505050" d="M1605 669L1613 664V765L1605 764Z" />
                <path fill="url(#win)" stroke="none" d="M1296 612L1605 669V764L1364 718 1355 708V666L1347 664 1296 698Z" />
                <path fill="#1b1b1b" d="M1287 612Q1289 605 1294 603L1302 606Q1296 608 1296 614V697L1290 702 1287 698Z" />
                <path fill="#111" d="M1347 665L1293 702 1337 714 1347 706Z" />
                <path fill="#1b1b1b" d="M1651 684Q1652 674 1658 671L1673 668Q1660 676 1660 686V765L1654 769 1651 765Z" />
                <path fill="#111" d="M1711 732L1655 769 1702 781 1711 774Z" />

                <path fill="#505050" d="M624 557L708 501V598L624 655Z" />
                <path fill="#0a0a0a" d="M624 557Q624 552 627 550L714 492 708 501Z" />
                <path fill="#0a0a0a" d="M624 655L708 598Q710 607 717 609L634 666Q625 665 624 655Z" />
                <path fill="#333" d="M634 666L717 609 740 613 656 670Z" />
                <path fill="#333" d="M717 502L867 529 783 586 717 575Z" />
                <path fill="#4f4f4f" d="M867 529V558Q849 566 849 582V600L854 608 867 599V622L783 661V586Z" />
                <path fill="#151515" d="M867 558L876 560Q860 568 859 580V602L854 607Q849 605 849 598V580Q850 564 867 558Z" />
                <path fill="#8b500b" stroke="none" d="M861 572Q866 565 876 560V601L867 599 859 604V580Z" />

                <path fill="#4b4b4b" d="M777 666L861 609V616L777 671Z" />
                <path fill="#333" d="M845 623L867 617V627Z" />
                <path fill="#505050" d="M760 680L844 623V633L760 689Z" />
                <path fill="#333" d="M844 633L760 689 826 702 840 693Q860 682 895 684 940 690 941 704L923 719 992 732 1007 723Q1035 712 1070 715 1105 722 1107 733L1089 750 1628 848 1713 792Z" />
                <path fill="#151515" d="M940 699V705L923 719V710L935 702ZM1106 729L1107 735 1089 750V740L1100 732Z" />
                <path fill="#050505" d="M1628 848L1713 792H1718L1633 848Z" />

                <path fill="#525252" d="M708 598V499Q708 492 716 492L857 518Q868 519 868 510V428Q869 421 876 421L1712 573Q1720 576 1720 584V636L1711 634V592Q1711 584 1702 582L1363 520Q1355 519 1355 526V568L1347 567V526Q1346 516 1337 514L1221 493Q1213 492 1213 500V621L1204 620V500Q1203 491 1193 489L1054 463Q1046 462 1046 470V591L1037 589V470Q1037 460 1027 458L885 432Q877 431 877 440V560L867 558V529L717 502V600L740 604V613L717 609Q708 606 708 598Z" />
                <path fill="#525252" d="M717 582L724 584V591L717 589Z" />
                <path fill="#525252" d="M844 623L867 627V618L861 617V609L867 608V599L877 601V619Q878 628 886 630L1026 657Q1037 658 1037 648V630L1046 632V652Q1047 661 1056 662L1192 687Q1204 688 1204 680V661L1213 662V680Q1214 690 1222 692L1337 713Q1347 714 1347 705V665L1355 666V706Q1356 715 1364 717L1702 780Q1711 780 1711 771V732L1720 733V785Q1720 791 1713 792L844 633Z" />
              </g>
              <g stroke="#0000f0" fill="#0000f0" stroke-width="1">
                <path d="M1659 868V832M1656 840L1659 829 1663 840ZM1660 868L1645 865M1652 861L1641 864 1651 869ZM1655 863L1665 873M1665 863L1655 873M1654 868H1666" />
              </g>
              <g>
                <path d="M327 910V882" stroke="#1d6b1d" stroke-width="5" /><path d="M321 886L327 875 333 886Z" fill="#1d5a1d" />
                <path d="M328 911L317 917" stroke="#15158a" stroke-width="5" /><circle cx="315" cy="918" r="5" fill="#1616b8" />
                <path d="M329 910L304 905" stroke="#c81e1e" stroke-width="4" /><path d="M294 903L307 900 304 910Z" fill="#c81e1e" />
                <g font-family="Liberation Serif, serif" font-size="15">
                  <text x="324" y="873" fill="#1d8a1d">Y</text><text x="286" y="907" fill="#f02020">X</text><text x="303" y="928" fill="#2020f0">Z</text>
                </g>
              </g>
            </svg>
            <div class="handle"><i class="dot"></i></div>
            <div class="viewbar">
              <template v-for="v in viewTools" :key="v[0]">
                <button class="plain" :aria-label="v[0]"><Icon :name="v[0]" /></button>
                <i v-if="v[1]" class="caret dim"></i>
              </template>
            </div>
            <div class="pane">
              <button v-for="(p, n) in paneTabs" :key="p" :class="{ active: n === 0 }" :aria-label="p"><Icon :name="p" /></button>
            </div>
          </section>
        </div>

        <div class="sheets">
          <div class="navs">
            <button v-for="d in navs" :key="d" aria-label="Прокрутка вкладок"><svg viewBox="0 0 20 20"><path :d="d" fill="#8082a0" stroke="#8082a0" stroke-width="2" /></svg></button>
          </div>
          <button class="sheet active">Модель</button>
          <button class="sheet study">Исследование движения 1</button>
          <div class="rest"></div>
        </div>
      </main>
      <aside class="side">
        <div class="sidebar">
          <i class="hgrip"></i>
          <button v-for="s in side" :key="s" class="plain" :aria-label="s"><Icon :name="s" /></button>
        </div>
      </aside>
    </div>

    <footer class="status">
      <span>SOLIDWORKS 2025 SP0.0</span>
      <span class="edit">Редактируется Деталь</span>
      <Icon name="rebuild" />
      <span class="units">Настройка</span>
      <i class="caret up"></i>
      <Icon name="tag" />
    </footer>

    <div class="taskbar">
      <div class="apps">
        <button v-for="a in apps" :key="a.n" class="app-btn" :class="{ on: a.on, run: a.run }" :aria-label="a.n">
          <svg viewBox="0 0 30 30">
            <path v-for="(s, n) in a.s" :key="n" :d="s[0]" :fill="s[1]" :stroke="s[2] || 'none'" :stroke-width="s[3] || 1" />
          </svg>
          <span v-if="a.txt" class="glyph" :class="{ raised: a.sub }">{{ a.txt }}</span>
          <span v-if="a.sub" class="sub">{{ a.sub }}</span>
        </button>
      </div>
      <div class="tray">
        <button class="plain" aria-label="Скрытые значки"><Icon name="up" /></button>
        <svg class="touch" viewBox="0 0 20 20"><path d="M3 1h14q2 0 2 2v13q0 2-2 2H3q-2 0-2-2V3q0-2 2-2zM1 12h18M10 12v6" fill="none" stroke="#222" stroke-width="1.500" /></svg>
        <span class="lang">РУС</span>
        <svg class="net" viewBox="0 0 20 20"><path d="M1 8q9-8 18 0M4 11q6-6 12 0M7 14q3-3 6 0" fill="none" stroke="#222" stroke-width="1.600" /><circle cx="10" cy="16" r="1.600" fill="#222" /></svg>
        <svg class="net" viewBox="0 0 20 20"><path d="M1 7h4l5-4v14l-5-4H1zM13 8q1 2 0 4M15 5q3 5 0 10M17 3q4 7 0 14" fill="none" stroke="#222" stroke-width="1.400" /></svg>
        <svg class="net" viewBox="0 0 20 20"><path d="M3 6h14v11H3zM18 9h2v5h-2z" fill="none" stroke="#222" stroke-width="1.500" /><path d="M9 8h6v7H5v-4zM5 1L1 8h3l-1 4 5-6H5l1-4z" fill="#111" /></svg>
        <div class="clock"><span>15:52</span><span>06.02.2025</span></div>
      </div>
    </div>
  </div>
</template>

<style>
body { background: #f7f7f7; }
.icon { display: block; width: 20px; height: 20px; flex: none; overflow: visible; }
.icon.off { filter: grayscale(1); opacity: .3; }
</style>

<style scoped>
.app { min-height: 100vh; display: flex; flex-direction: column; background: #f7f7f7; color: #111; font: 14px/20px "Noto Sans", "Noto Sans CJK SC", sans-serif; }
.app *, .app { box-sizing: border-box; }
button { font: inherit; color: inherit; padding: 0; margin: 0; border: 0; background: none; display: flex; align-items: center; justify-content: center; }
a { color: inherit; text-decoration: none; }
.caret { flex: none; width: 0; height: 0; border: 3px solid transparent; border-top: 4px solid #444; border-bottom: 0; }
.caret.dim { border-top-color: #888; }
.caret.up { border-top: 0; border-bottom: 4px solid #333; }
.caret.wide { margin: 0 5px 0 10px; }

.title { display: flex; align-items: center; height: 41px; border-top: 1px solid #bbb; border-bottom: 1px solid #bbb; }
.logo { display: flex; align-items: center; width: 146px; padding-left: 4px; color: #da291c; font: italic 13px/20px Lato, sans-serif; }
.logo .ds { width: 22px; height: 22px; margin-right: 8px; }
.logo b { font-weight: 900; }
.menu { display: flex; align-items: center; gap: 16px; font-size: 13px; width: 485px; height: 100%; border-right: 1px solid #bbb; white-space: nowrap; }
.menu a { padding-top: 3px; }
.menu .icon { width: 16px; height: 16px; }
.quick { display: flex; align-items: center; width: 534px; padding-left: 20px; }
.quick .first { width: 26px; margin-right: 7px; }
.quick .q { width: 26px; margin-right: 7px; }
.quick .caret { margin-right: 8px; }
.select-btn { display: flex; height: 32px; border: 1px solid #888; margin-left: -3px; }
.select-btn .pressed { width: 32px; background: #b0b0b0; border-right: 1px solid #777; }
.select-btn .arrow { width: 12px; }
.select-btn .caret { margin: 0; }
.w33 { width: 33px; }
.quick .w33 + .caret { margin-left: 3px; }
.doc { font-size: 13px; flex: 1; white-space: nowrap; }
.search { display: flex; align-items: center; gap: 8px; width: 287px; height: 29px; background: #fff; border: 1px solid #aaa; padding: 0 5px; }
.search input { flex: 1; min-width: 0; border: 0; outline: 0; background: none; font: 13px/20px "Noto Sans", sans-serif; color: #333; padding: 0; }
.search input::placeholder { color: #555; opacity: 1; }
.search .icon { width: 18px; height: 18px; }
.win { display: flex; align-items: center; gap: 21px; padding: 0 15px 0 14px; }

.bars { display: flex; height: 33px; border-bottom: 1px solid #bbb; }
.bars.upper { height: 31px; border-bottom: 0; }
.bar { display: flex; align-items: center; border: 1px solid #888; border-width: 1px 1px 0 0; padding: 0 6px 0 4px; }
.first-bar { border-width: 0 1px 0 0; padding-right: 4px; }
.grip { width: 3px; height: 26px; margin-right: 7px; background: radial-gradient(circle, #888 1px, transparent 1px) 0 0 / 3px 4px; }
.tool { width: 27px; height: 28px; position: relative; }
.over { position: absolute; top: 0; left: 4px; font: 9px/12px "Noto Sans", sans-serif; }
.q-mark { position: absolute; right: 5px; bottom: 2px; color: #1f6f9a; font: bold 11px/16px "Noto Sans", sans-serif; }
.vsep { width: 1px; height: 22px; background: #888; margin: 0 4px 0 3px; }

.ribbon-row { display: flex; height: 83px; }
.ribbon { display: flex; flex: 1; position: relative; border-right: 1px solid #888; border-bottom: 1px solid #888; padding: 1px 0 3px; }
.rb { flex-direction: column; justify-content: flex-start; position: relative; padding-top: 6px; font-size: 13px; line-height: 19px; white-space: nowrap; border: 1px solid transparent; }
.rb.sep { border-right-color: #bbb; }
.rb.off { color: #a9a9a9; }
.rb.off .icon { opacity: .5; }
.rb.on { background: #b0b0b0; border-color: #666; }
.rb .caret { margin-top: auto; margin-bottom: 7px; }
.fold { margin: auto 4px 2px auto; }
.fold .icon { width: 16px; height: 16px; }
.mini { width: 63px; height: 34px; display: flex; align-items: center; gap: 10px; padding-left: 3px; border: 1px solid #888; border-left: 0; }
.mini .grip { margin: 0; }
.mini .icon { margin-right: -4px; }
.mini .icon:last-child { width: 13px; height: 13px; }

.work { flex: 1; display: flex; }
.main { flex: 1; min-width: 0; display: flex; flex-direction: column; border-right: 1px solid #9bb;
  background: radial-gradient(ellipse 1000px 420px at 88% 22%, #d8dbe8 0, rgba(220,223,235,.6) 50%, rgba(255,255,255,0) 100%),
    linear-gradient(180deg, #fefeff 0, #fbfcfe 25%, #e6eaf3 47%, #e5e9f2 55%, #fdfdfe 75%, #fff 85%, #f8f9fa 100%); }
.tabrow { display: flex; height: 28px; }
.tab { flex: none; border: 1px solid #888; border-left: 0; background: #d4d4d4; color: #222; white-space: nowrap; border-top: 0; }
.tab.active { background: #f7f7f7; font-weight: 700; border-bottom-color: #f7f7f7; }
.docwin { display: flex; gap: 6px; margin-left: auto; padding: 2px 9px 0 0; opacity: .5; }
.docwin .icon { width: 18px; height: 18px; }
.docwin .plain { width: 20px; }
.body { flex: 1; display: flex; }

.panel { width: 277px; flex: none; background: #f7f7f7; border-right: 1px solid #888; border-left: 1px solid #bbb; display: flex; flex-direction: column; }
.dot { width: 6px; height: 6px; border: 1px solid #888; border-radius: 50%; background: #ccc; }
.splitter { height: 25px; margin-right: 2px; border-top: 1px solid #7aa; border-bottom: 1px solid #bbb; display: flex; align-items: center; justify-content: center; box-shadow: inset 0 4px 0 #f7f7f7, inset 0 5px 0 #ccc; }
.splitter .dot { margin-top: 4px; }
.ptabs { display: flex; height: 26px; margin: 4px 2px 0 1px; border-bottom: 1px solid #999; }
.ptabs button { width: 40px; height: 26px; background: #d2d2d2; border: 1px solid #888; border-left: 0; }
.ptabs button.active { background: #f7f7f7; border-bottom-color: #f7f7f7; }
.ptabs .icon { width: 18px; height: 18px; }
.more { margin: 4px 1px 0 auto; }
.filter { height: 32px; margin: 0 5px 0 4px; border: 1px solid #bbb; display: flex; align-items: center; padding-left: 2px; }
.filter .icon { width: 18px; height: 18px; }
.treewrap { display: flex; flex: 1; margin-right: 2px; }
.tree { flex: 1; min-width: 0; margin: 1px 0 0; padding: 0; list-style: none; overflow: hidden; border-right: 1px solid #fff; color: #1b1b1b; }
.tree li { display: flex; align-items: center; height: 24px; white-space: nowrap; }
.tree li.root { padding-left: 4px; gap: 4px; }
.tree .icon { width: 18px; height: 18px; }
.han { font-size: 16px; line-height: 16px; }
.exp { flex: none; width: 5px; height: 8px; margin: 0 12px 3px 9px; border: 4px solid transparent; border-left: 5px solid #555; border-right: 0; }
.exp.none { visibility: hidden; }
.ic { position: relative; margin-right: 5px; }
.ic b { position: absolute; left: 5px; top: 4px; font: bold 11px/14px "Liberation Serif", serif; color: #1f6f9a; }
.vscroll { width: 19px; background: #efefef; padding: 21px 0 0 8px; }
.vscroll i { display: block; width: 3px; height: 356px; background: #858585; border-radius: 2px; }
.hscroll { height: 25px; margin: 0 2px 0 0; background: #efefef; border-top: 1px solid #fff; border-bottom: 2px solid #ccc; padding: 8px 0 0 21px; }
.hscroll i { display: block; width: 80px; height: 3px; background: #858585; border-radius: 2px; }

.canvas { position: relative; flex: 1; min-width: 0; border-top: 1px solid #888; }
.model { position: absolute; inset: 0; width: 100%; height: 100%; }
.handle { position: absolute; left: -1px; top: 341px; width: 12px; height: 49px; background: #f7f7f7; border: 1px solid #888; border-left: 0; display: flex; align-items: center; justify-content: center; }
.viewbar { position: relative; display: flex; align-items: center; justify-content: center; gap: 7px; padding: 4px 4px 0 0; }
.viewbar .icon { width: 19px; height: 19px; }
.viewbar .caret { margin-right: 1px; }
.pane { position: absolute; right: 0; top: 29px; width: 32px; border: 1px solid #888; border-right: 0; }
.pane button { width: 100%; height: 30px; background: #d4d4d4; border-bottom: 1px solid #888; }
.pane button:last-child { border-bottom: 0; }
.pane button.active { background: #f7f7f7; }
.pane .icon { width: 18px; height: 18px; }

.sheets { display: flex; height: 20px; background: #f7f7f7; font-size: 15px; }
.navs { display: flex; width: 82px; background: #9294ae; border-top: 1px solid #000; padding-left: 1px; }
.navs button { flex: 1; background: #a9abc3; border: 1px solid #8c8ea8; }
.navs svg { width: 12px; height: 12px; }
.sheet { line-height: 18px; }
.sheet.active { width: 91px; font-weight: 700; border-left: 1px solid #888; padding-bottom: 2px; }
.sheet.study { width: 240px; background: #d4d4d4; border: 1px solid #888; border-bottom: 0; padding: 0 10px 2px 0; }
.rest { flex: 1; border-top: 1px solid #888; }
.side { width: 33px; flex: none; }
.sidebar { border-bottom: 1px solid #888; height: 203px; padding-left: 2px; display: flex; flex-direction: column; align-items: center; gap: 7px; }
.sidebar .icon { width: 19px; height: 19px; }
.hgrip { width: 28px; height: 3px; margin: 3px 0 2px; background: radial-gradient(circle, #999 1px, transparent 1px) 0 0 / 4px 3px; }

.status { display: flex; align-items: center; height: 22px; border-top: 1px solid #888; border-bottom: 1px solid #aaa; padding: 4px 3px 0 1px; }
.status .edit { margin-left: auto; margin-right: 28px; }
.status .icon { width: 16px; height: 16px; margin-bottom: 2px; }
.status .units { margin-left: 81px; margin-right: 26px; }
.status .caret { margin-right: 28px; }

.taskbar { height: 60px; display: flex; align-items: center; background: linear-gradient(90deg, #dfd8e8 0, #ddd8ea 28%, #ead8ec 37%, #f4dfe6 44%, #f7e4e3 56%, #f2dbdf 72%, #ebd6d6 100%); }
.apps { display: flex; padding-left: 13px; }
.app-btn { width: 55px; height: 50px; position: relative; border-radius: 5px; }
.app-btn.on { background: linear-gradient(#f4ebf8, #f4ebf8) center / 48px 50px no-repeat; }
.app-btn svg { width: 30px; height: 30px; display: block; overflow: visible; }
.app-btn.on::after, .app-btn.run::after { content: ""; position: absolute; bottom: 0; left: 24px; width: 7px; height: 4px; border-radius: 2px; background: #857c84; }
.app-btn.on::after { left: 18px; width: 19px; background: #3a78b0; }
.glyph { position: absolute; inset: 15px 0 auto; text-align: center; color: #fff; font: bold 20px/20px "Noto Sans", sans-serif; }
.glyph.raised { inset: 11px 0 auto; font-size: 13px; line-height: 18px; }
.sub { position: absolute; inset: 31px 0 auto; text-align: center; color: #fff; font: bold 8px/10px "Noto Sans", sans-serif; }
.app-btn.on .sub { background: #111; inset: 31px 12px auto 18px; }
.tray { margin-left: auto; display: flex; align-items: center; padding-right: 24px; color: #1a1a1a; }
.tray .plain .icon { width: 18px; height: 18px; }
.touch { width: 20px; height: 20px; margin: 0 25px 0 20px; }
.lang { margin-right: 24px; }
.net { width: 21px; height: 21px; margin-right: 9px; }
.clock { display: flex; flex-direction: column; align-items: flex-end; margin-left: 11px; }
</style>
